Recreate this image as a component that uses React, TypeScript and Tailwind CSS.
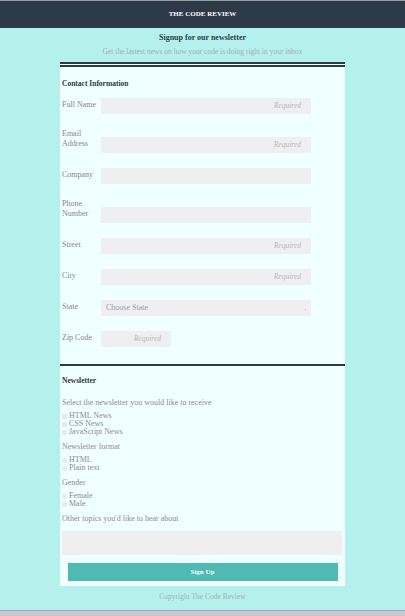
import React from "react";

const Field = ({
  label,
  required,
  short,
  select,
}: {
  label: string;
  required?: boolean;
  short?: boolean;
  select?: boolean;
}) => {
  return (
    <div className="flex items-end">
      <label className="w-[39px] pb-[5px] text-[8px] leading-[9.5px] text-[#888596]">
        {label}
      </label>
      {select ? (
        <div className="flex h-[16px] w-[210px] items-center justify-between bg-[#efeff1] px-[5px] text-[8px] text-[#9c9aa8]">
          <span>Choose State</span>
          <span className="text-[6px]">.</span>
        </div>
      ) : (
        <div
          className={`flex h-[16px] items-center justify-end bg-[#efeff1] text-[7.5px] italic text-[#b9b7c0] ${
            short ? "w-[70px] pr-[10px]" : "w-[210px] pr-[10px]"
          }`}
        >
          {required ? "Required" : ""}
        </div>
      )}
    </div>
  );
};

const Check = ({ text, round }: { text: string; round?: boolean }) => (
  <div className="flex h-[8px] items-center gap-[2px] text-[8px] leading-[8px] text-[#8d8a98]">
    <span
      className={`h-[5px] w-[5px] bg-[#e8e9ec] ${round ? "rounded-full" : ""}`}
    ></span>
    <span>{text}</span>
  </div>
);

export default function App() {
  return (
    <div
      className="flex min-h-[616px] flex-col bg-[#c9c9cb]"
      style={{ fontFamily: '"Liberation Serif", serif' }}
    >
      <div className="h-[1px] bg-[#9a9ea4]"></div>
      <div className="flex h-[27px] items-center justify-center bg-[#2d3a47]">
        <span className="text-[7px] font-bold text-white">THE CODE REVIEW</span>
      </div>
      <div className="flex h-[583px] flex-col items-center border-b border-b-[#a59ce0] bg-[#b5f1ec]">
        <p className="mt-[5px] text-[8px] font-bold leading-[10px] text-[#2d3a47]">
          Signup for our newsletter
        </p>
        <p className="mt-[4px] text-[7.5px] leading-[10px] text-[#a9aab3]">
          Get the lastest news on how your code is doing right in your inbox
        </p>
        <div className="mt-[5px] flex w-[285px] flex-col bg-[#f0ffff]">
          <div className="h-[2px] bg-[#2d3a47]"></div>
          <div className="h-[1px]"></div>
          <div className="h-[2px] bg-[#2d3a47]"></div>
          <div className="flex flex-col px-[2px]">
            <p className="mt-[12px] text-[7.5px] font-bold leading-[10px] text-[#2d3a47]">
              Contact Information
            </p>
            <div className="mt-[9px] flex flex-col gap-[15px]">
              <Field label="Full Name" required />
              <Field label="Email Address" required />
              <Field label="Company" />
              <Field label="Phone Number" />
              <Field label="Street" required />
              <Field label="City" required />
              <Field label="State" select />
              <Field label="Zip Code" required short />
            </div>
          </div>
          <div className="mt-[17px] h-[2px] bg-[#2d3a47]"></div>
          <div className="flex flex-col px-[2px]">
            <p className="mt-[10px] text-[7.5px] font-bold leading-[10px] text-[#2d3a47]">
              Newsletter
            </p>
            <p className="mt-[12px] text-[8px] leading-[10px] text-[#8d8a98]">
              Select the newsletter you would like to receive
            </p>
            <div className="mt-[4px] flex flex-col">
              <Check text="HTML News" />
              <Check text="CSS News" />
              <Check text="JavaScript News" />
            </div>
            <p className="mt-[6px] text-[8px] leading-[10px] text-[#8d8a98]">
              Newsletter format
            </p>
            <div className="mt-[4px] flex flex-col">
              <Check text="HTML" round />
              <Check text="Plain text" round />
            </div>
            <p className="mt-[6px] text-[8px] leading-[10px] text-[#8d8a98]">
              Gender
            </p>
            <div className="mt-[4px] flex flex-col">
              <Check text="Female" round />
              <Check text="Male" round />
            </div>
            <p className="mt-[6px] text-[8px] leading-[10px] text-[#8d8a98]">
              Other topics you'd like to hear about
            </p>
            <div className="mt-[7px] h-[24px] w-[280px] bg-[#efeff1]"></div>
            <button className="mx-auto mt-[8px] flex h-[18px] w-[270px] items-center justify-center bg-[#4ebab2] text-[7px] font-bold text-white">
              Sign Up
            </button>
            <div className="h-[5px]"></div>
          </div>
        </div>
        <p className="mt-[5px] text-[7.5px] text-[#a7adb3]">Copyright The Code Review</p>
      </div>
    </div>
  );
}
